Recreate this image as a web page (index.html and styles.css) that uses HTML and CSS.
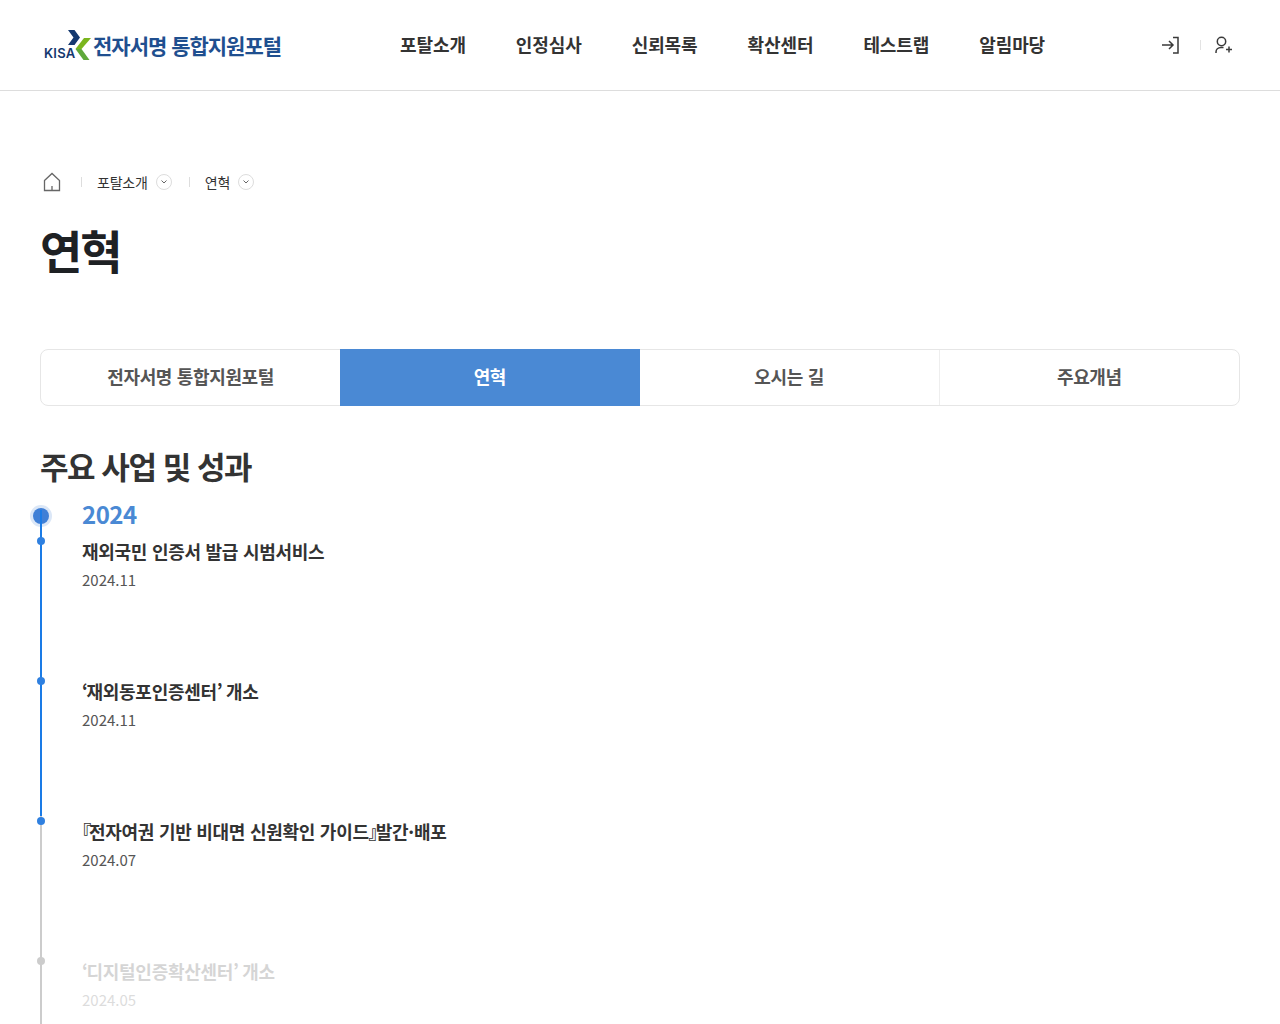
FILE: index.html
```html
<!DOCTYPE html>
<html lang="ko">
<head>
<meta charset="utf-8">
<title>연혁</title>
<link rel="stylesheet" href="styles.css">
</head>
<body>
<header class="header">
  <a class="logo">
    <span class="logo-kisa">KISA</span>
    <svg class="logo-mark" viewBox="0 0 24 30" width="24" height="30"><path d="M1 0h6.500l5.500 7.500-5.500 7.500H1l5.500-7.500z" fill="#14386f"/><path d="M24 8h-7l-8.500 11h6z" fill="#7ab51d"/><path d="M8.500 19l8 11h6l-8-11z" fill="#5fa83a"/></svg>
    <span class="logo-text">전자서명 통합지원포털</span>
  </a>
  <nav class="gnb">
    <a>포탈소개</a><a>인정심사</a><a>신뢰목록</a><a>확산센터</a><a>테스트랩</a><a>알림마당</a>
  </nav>
  <div class="util">
    <svg width="20" height="20" viewBox="0 0 20 20" fill="none" stroke="#3a3a3a" stroke-width="1.500"><path d="M2 10h11M9 6l4 4-4 4M13 2.500h5v15.500h-5"/></svg>
    <span class="util-sep"></span>
    <svg width="20" height="20" viewBox="0 0 20 20" fill="none" stroke="#3a3a3a" stroke-width="1.500"><circle cx="7.500" cy="6.500" r="4.200"/><path d="M2 18v-1c0-2.500 2-4.500 5-4.500h2.500M12 14.500h6M15 11.500v6"/></svg>
  </div>
</header>
<main class="main">
  <div class="crumbs">
    <svg class="home" width="18" height="20" viewBox="0 0 18 20" fill="none" stroke="#666" stroke-width="1.300"><path d="M1.500 8.500L9 1.500l7.500 7v10h-15zM9 14v4.500"/></svg>
    <span class="crumb-sep"></span>
    <span class="crumb">포탈소개<i class="chev"><svg width="8" height="6" viewBox="0 0 8 6" fill="none" stroke="#666" stroke-width="1"><path d="M1.500 1.500L4 4l2.500-2.500"/></svg></i></span>
    <span class="crumb-sep"></span>
    <span class="crumb">연혁<i class="chev"><svg width="8" height="6" viewBox="0 0 8 6" fill="none" stroke="#666" stroke-width="1"><path d="M1.500 1.500L4 4l2.500-2.500"/></svg></i></span>
  </div>
  <h1 class="title">연혁</h1>
  <div class="tabs">
    <a class="tab">전자서명 통합지원포털</a>
    <a class="tab active">연혁</a>
    <a class="tab">오시는 길</a>
    <a class="tab">주요개념</a>
  </div>
  <h2 class="section">주요 사업 및 성과</h2>
  <div class="timeline">
    <div class="year">2024</div>
    <ul class="events">
      <li class="event on"><strong>재외국민 인증서 발급 시범서비스</strong><span>2024.11</span></li>
      <li class="event on"><strong><em class="qt">‘</em>재외동포인증센터<em class="qt">’</em> 개소</strong><span>2024.11</span></li>
      <li class="event"><strong><em class="br">『</em>전자여권 기반 비대면 신원확인 가이드<em class="br">』</em>발간·배포</strong><span>2024.07</span></li>
      <li class="event faded"><strong><em class="qt">‘</em>디지털인증확산센터<em class="qt">’</em> 개소</strong><span>2024.05</span></li>
    </ul>
  </div>
</main>
</body>
</html>
```
FILE: styles.css
```css
* { box-sizing: border-box; }
html, body { margin: 0; height: 1024px; overflow: hidden; }
body { font-family: "Noto Sans CJK KR", sans-serif; color: #222; background: #fff; }
a { color: inherit; text-decoration: none; }

.header { height: 91px; border-bottom: 1px solid #ddd; display: flex; align-items: center; padding: 0 46px 0 44px; position: relative; }
.logo { display: flex; align-items: flex-end; height: 36px; width: 340px; margin-top: -4px; }
.logo-kisa { font: 600 13px/1 "Inter", sans-serif; color: #14386f; letter-spacing: .2px; margin-bottom: 1px; width: 30px; }
.logo-mark { margin-left: -7px; margin-bottom: 1px; }
.logo-text { font: 700 21px/32px "Noto Sans CJK KR", sans-serif; color: #1f4f8f; letter-spacing: -1px; margin-left: 2px; }
.gnb { display: flex; gap: 50px; margin-left: 16px; flex: 1; font-weight: 600; font-size: 18px; letter-spacing: -.1px; color: #333; margin-top: -2px; }
.util { display: flex; align-items: center; }
.util-sep { width: 1px; height: 10px; background: #e3e3e3; margin: 0 13px 0 20px; }

.main { padding: 0 40px; }
.crumbs { display: flex; align-items: center; height: 20px; margin-top: 81px; padding-left: 3px; font-size: 14px; letter-spacing: -.2px; color: #333; }
.crumb { display: flex; align-items: center; }
.crumb-sep { width: 1px; height: 10px; background: #ddd; margin: 0 15px 0 20px; }
.crumb + .crumb-sep { margin-left: 17px; margin-right: 15px; }
.chev { width: 16px; height: 16px; border: 1px solid #ddd; border-radius: 50%; margin-left: 8px; display: flex; align-items: center; justify-content: center; }
.title { margin: 27px 0 0; font-size: 46px; line-height: 60px; font-weight: 700; letter-spacing: -2px; color: #1e2124; }
.tabs { display: flex; margin-top: 70px; height: 57px; border: 1px solid #e6e6e6; border-radius: 8px; }
.tab { flex: 1; display: flex; align-items: center; justify-content: center; padding-bottom: 3px; font-size: 18px; font-weight: 600; letter-spacing: -.35px; color: #555; border-left: 1px solid #eee; }
.tab:first-child { border-left: 0; }
.tab.active { background: #4a89d4; color: #fff; margin: -1px 0; border: 0; }
.tab.active + .tab { border-left: 0; }
.section { margin: 38px 0 0; font-size: 31px; line-height: 44px; font-weight: 700; letter-spacing: -1.45px; color: #333; }
.timeline { position: relative; padding-left: 42px; margin-top: 13px; }
.timeline::before { content: ""; position: absolute; left: 0; top: 6px; width: 2px; height: 540px; background: #ccc; }
.year { position: relative; font-size: 24px; line-height: 26px; font-weight: 600; letter-spacing: -.5px; color: #4a89d4; height: 30px; }
.year::before { content: ""; position: absolute; left: -49px; top: 7px; width: 16px; height: 16px; border-radius: 50%; background: #3f7fd6; box-shadow: 0 0 0 3px #dbe7f7; }
.events { list-style: none; margin: 5px 0 0; padding: 0; }
.event { position: relative; height: 140px; display: flex; flex-direction: column; padding-top: 2px; }
.event strong { font-size: 18px; line-height: 27px; font-weight: 600; letter-spacing: -.27px; color: #333; }
.event span { font-size: 15px; line-height: 20px; margin-top: 5px; color: #555; }
.event::before { content: ""; position: absolute; left: -45px; top: 1px; width: 8px; height: 8px; border-radius: 50%; background: #2f80e0; z-index: 1; }
.event.on::after { content: ""; position: absolute; left: -42px; top: -26px; width: 2px; height: 166px; background: #1a7be6; }
.event.on + .event.on::after { top: 0; height: 140px; }
.br { font-style: normal; font-feature-settings: "palt"; letter-spacing: -2px; }
.qt { font-style: normal; font-feature-settings: "palt"; letter-spacing: -1.4px; }
.event.faded strong, .event.faded span { opacity: .2; }
.event.faded::before { background: #ccc; }
```
